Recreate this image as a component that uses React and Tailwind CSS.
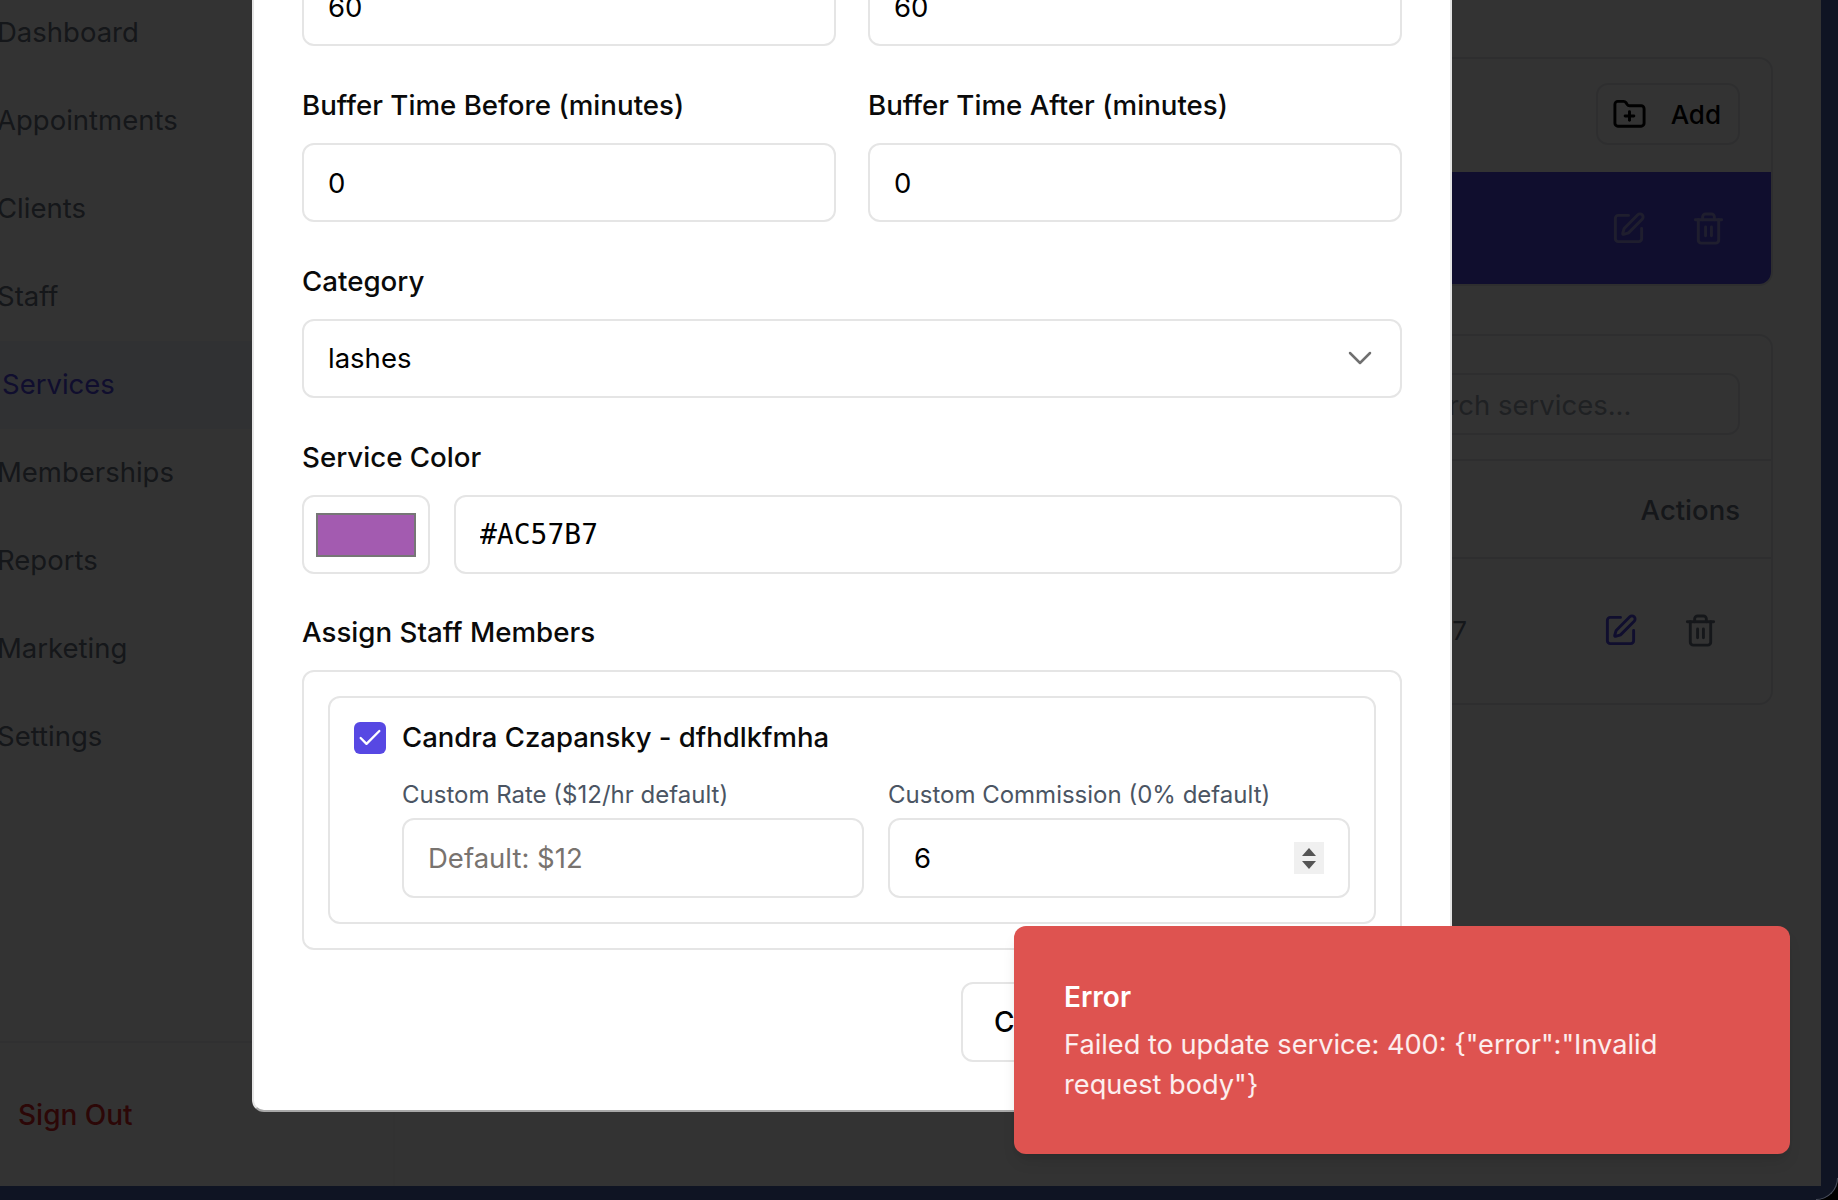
import { Check, ChevronDown, FolderPlus, SquarePen, Trash2 } from 'lucide-react'

const navItems = ['Dashboard', 'Appointments', 'Clients', 'Staff', 'Services', 'Memberships', 'Reports', 'Marketing', 'Settings']

const boxClass = 'w-full px-[24px] border-2 border-[#e5e5e5] rounded-[12px] bg-white text-black outline-none placeholder:text-[#78736f]'
const inputClass = boxClass + ' h-[79px] text-[27.5px]'
const smallInputClass = boxClass + ' h-[80px] text-[27.5px]'
const labelClass = 'block h-[35px] leading-[35px] mb-[20px] text-[27.7px] font-[450] text-[#0a0a0a]'
const subLabelClass = 'block h-[30px] leading-[30px] mb-[8px] text-[24px] text-[#4b5563]'

function Field({ label, value }) {
  return (
    <div>
      <label className={labelClass}>{label}</label>
      <input readOnly value={value} className={inputClass} />
    </div>
  )
}

function Sidebar() {
  return (
    <aside className="w-[395px] shrink-0 flex flex-col border-r-2 border-[#fafafa]">
      <nav className="flex flex-col mt-[-11px]">
        {navItems.map((item) => (
          <a
            key={item}
            className={
              item === 'Services'
                ? 'h-[88px] flex items-center pl-[2px] bg-[#eef2ff] text-[27.5px] font-normal text-[#4f46e5]'
                : 'h-[88px] flex items-center ml-[-3px] text-[27.5px] font-normal text-[#6b7280]'
            }
          >
            {item}
          </a>
        ))}
      </nav>
      <div className="mt-auto h-[145px] border-t-2 border-[#f0f1f3] pt-[51px] pl-[18px] text-[28px] font-medium text-[#dc2626]">
        Sign Out
      </div>
    </aside>
  )
}

function MainContent() {
  return (
    <main className="flex-1 pt-[57px] pr-[48px] pl-[49px]">
      <section className="border-2 border-[#e5e7eb] rounded-[14px] bg-white">
        <div className="h-[113px] flex items-center justify-end pr-[31px] pb-[3px]">
          <button className="h-[62px] pl-[14px] pr-[17px] flex items-center gap-[24px] border-2 border-[#e5e7eb] rounded-[12px] text-[26px] font-medium text-black">
            <FolderPlus size={35} />
            Add
          </button>
        </div>
        <div className="h-[112px] flex items-center justify-end gap-[45px] pr-[45px] bg-[#4f46e5] rounded-b-[12px] text-[#9a96e6]">
          <SquarePen size={35} />
          <Trash2 size={35} />
        </div>
      </section>
      <section className="mt-[48px] h-[371px] border-2 border-[#e5e7eb] rounded-[14px] bg-white">
        <div className="h-[125px] flex justify-end border-b-2 border-[#e5e7eb] pt-[37px] pr-[31px]">
          <div className="w-[367px] h-[62px] flex items-center pl-[24px] pt-[3px] border-2 border-[#e5e7eb] rounded-[12px] text-[27.5px] text-[#9ca3af]">
            Search services...
          </div>
        </div>
        <div className="h-[98px] flex items-center justify-end pr-[31px] pt-[3px] border-b-2 border-[#e5e7eb] text-[27.5px] font-[450] text-[#6b7280]">
          Actions
        </div>
        <div className="h-[142px] flex items-center">
          <span className="ml-auto mr-[136px] text-[26px] text-[#6b7280]">#AC57B7</span>
          <div className="flex items-center gap-[45px] pr-[53px]">
            <SquarePen size={35} className="text-[#4f46e5]" />
            <Trash2 size={35} className="text-[#6b7280]" />
          </div>
        </div>
      </section>
    </main>
  )
}

function ServiceModal() {
  return (
    <div className="w-[1200px] shrink-0 border-2 border-[#e5e5e5] border-b-[#a8a8a8] rounded-[12px] bg-white p-[48px] flex flex-col gap-[42px]">
      <div className="grid grid-cols-2 gap-[32px]">
        <Field label="Duration (minutes)" value="60" />
        <Field label="Price" value="60" />
      </div>
      <div className="grid grid-cols-2 gap-[32px]">
        <Field label="Buffer Time Before (minutes)" value="0" />
        <Field label="Buffer Time After (minutes)" value="0" />
      </div>
      <div>
        <label className={labelClass}>Category</label>
        <div className="relative">
          <select className={inputClass + ' appearance-none'} defaultValue="lashes">
            <option value="lashes">lashes</option>
          </select>
          <ChevronDown size={40} strokeWidth={1.5} className="absolute right-[22px] top-[19px] text-[#707070]" />
        </div>
      </div>
      <div>
        <label className={labelClass}>Service Color</label>
        <div className="flex gap-[24px]">
          <div className="w-[128px] h-[79px] shrink-0 flex items-center justify-center border-2 border-[#e5e5e5] rounded-[12px]">
            <div className="w-[100px] h-[44px] border-2 border-[#767676] bg-[#a35bb0]" />
          </div>
          <input readOnly value="#AC57B7" className={boxClass + ' h-[79px] text-[28px] font-["DejaVu_Sans_Mono",monospace]'} />
        </div>
      </div>
      <div className="mt-[-1px]">
        <label className={labelClass}>Assign Staff Members</label>
        <div className="border-2 border-[#e5e5e5] rounded-[12px] p-[24px]">
          <div className="border-2 border-[#e5e5e5] rounded-[12px] p-[24px]">
            <div className="flex items-center gap-[16px] h-[32px]">
              <div className="w-[32px] h-[32px] flex items-center justify-center rounded-[6px] bg-[#5748e3]">
                <Check size={28} strokeWidth={2} className="text-white" />
              </div>
              <span className="text-[27.5px] font-[450] text-[#0a0a0a]">Candra Czapansky - dfhdlkfmha</span>
            </div>
            <div className="grid grid-cols-2 gap-[24px] pl-[48px] mt-[26px]">
              <div>
                <label className={subLabelClass}>Custom Rate ($12/hr default)</label>
                <input readOnly placeholder="Default: $12" className={smallInputClass} />
              </div>
              <div>
                <label className={subLabelClass}>Custom Commission (0% default)</label>
                <div className="relative">
                  <input readOnly value="6" className={smallInputClass} />
                  <div className="absolute right-[26px] top-[24px] w-[30px] h-[32px] flex flex-col items-center justify-center gap-[5px] bg-[#f0f0f0]">
                    <span className="w-0 h-0 border-x-[7px] border-x-transparent border-b-[8px] border-b-[#555]" />
                    <span className="w-0 h-0 border-x-[7px] border-x-transparent border-t-[8px] border-t-[#555]" />
                  </div>
                </div>
              </div>
            </div>
          </div>
        </div>
      </div>
      <div className="flex justify-end gap-[21px] mt-[-10px]">
        <button className="h-[80px] px-[31px] border-2 border-[#e5e5e5] rounded-[12px] text-[28px] font-medium text-black">Cancel</button>
        <button className="h-[80px] w-[261px] rounded-[12px] bg-[#4f46e5] text-[28px] font-medium text-white">Update Service</button>
      </div>
    </div>
  )
}

export default function App() {
  return (
    <div className="relative h-screen w-screen overflow-hidden bg-black font-['Inter',sans-serif]">
      <div className="h-full pr-[17px] pb-[14px] bg-[#0f1423] rounded-br-[22px]">
        <div className="relative h-[1186px] overflow-hidden flex bg-white">
          <Sidebar />
          <MainContent />
          <div className="absolute inset-0 bg-black/80 flex items-end pl-[252px] pb-[74px]">
            <ServiceModal />
          </div>
          <div className="absolute right-[31px] bottom-[32px] w-[776px] h-[228px] rounded-[12px] bg-[#de5350] pt-[53px] px-[50px] text-white shadow-lg">
            <div className="text-[28px] font-semibold leading-[36px]">Error</div>
            <div className="mt-[10px] text-[27.2px] leading-[40px] text-white/90">
              Failed to update service: 400: {'{"error":"Invalid'}
              <br />
              {'request body"}'}
            </div>
          </div>
        </div>
      </div>
      <div className="absolute right-0 bottom-0 size-[22px] rounded-br-[22px] border-r border-b border-[#4a4f5c]" />
    </div>
  )
}
